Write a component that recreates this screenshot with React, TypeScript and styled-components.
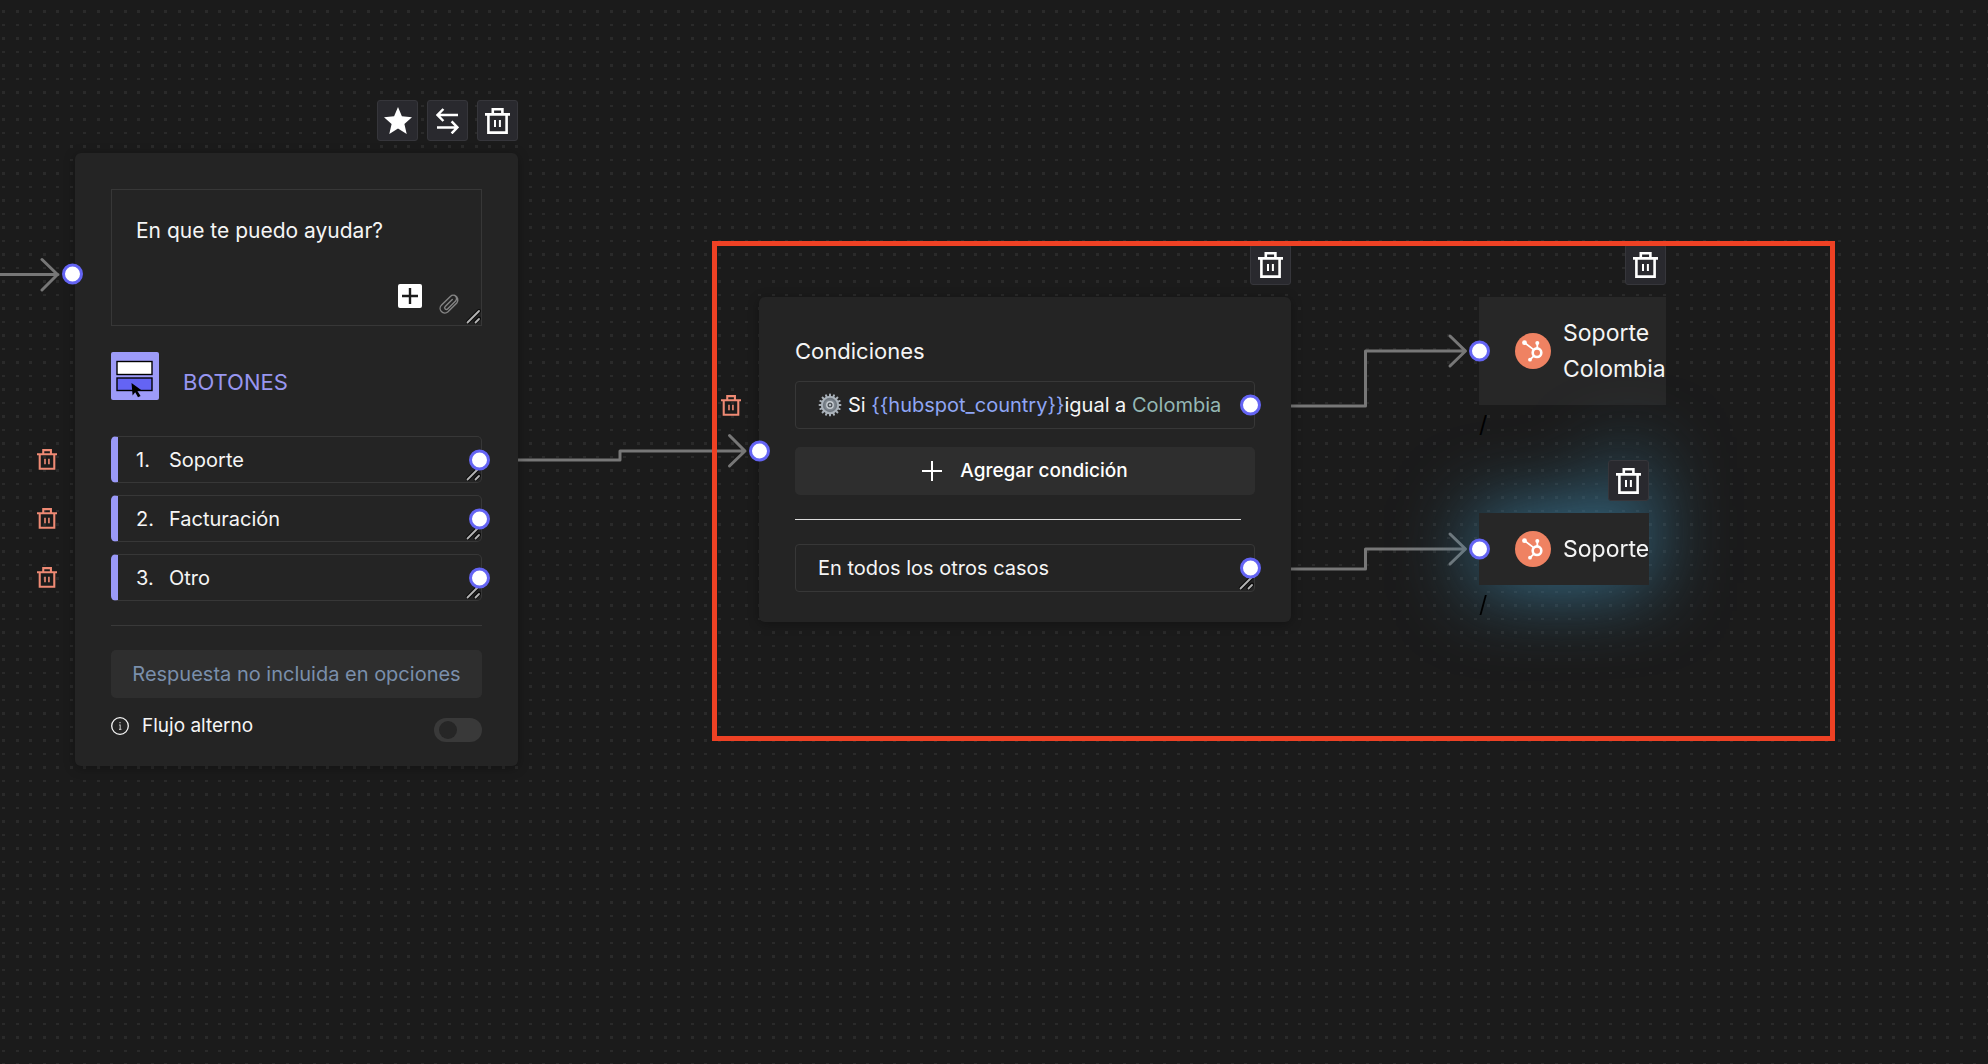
import React from "react";
import styled, { createGlobalStyle } from "styled-components";

const GlobalStyle = createGlobalStyle`
  *, *::before, *::after { box-sizing: border-box; }
  body { margin: 0; background: #1b1b1b; }
  button, input, textarea { font: inherit; color: inherit; margin: 0; }
`;

const Canvas = styled.main`
  position: relative;
  min-height: 100vh;
  overflow: hidden;
  background: #1b1b1b;
  color: #f5f5f5;
  font-family: Inter, "Liberation Sans", sans-serif;
  font-size: 20px;
  line-height: 32px;
`;

const Backdrop = styled.svg`
  position: absolute;
  inset: 0;
  width: 100%;
  height: 100%;
`;

/* Nodes sit freely on the flow canvas */
const Node = styled.section<{ $x: number; $y: number; $w?: number; $glow?: boolean }>`
  position: absolute;
  left: ${(p) => p.$x}px;
  top: ${(p) => p.$y}px;
  width: ${(p) => (p.$w ? `${p.$w}px` : "auto")};
  display: flex;
  flex-direction: column;
  gap: 12px;
  filter: ${(p) => (p.$glow ? "drop-shadow(0 0 40px #3c7c9c)" : "none")};
`;

const Toolbar = styled.div`
  display: flex;
  justify-content: flex-end;
  gap: 9px;
`;

const ToolButton = styled.button`
  width: 41px;
  height: 41px;
  padding: 0;
  display: grid;
  place-items: center;
  background: #29292e;
  border: 1px solid #36363b;
  border-radius: 3px;
  color: #fff;
  cursor: pointer;
`;

const Card = styled.div<{ $bottom: number }>`
  position: relative;
  display: flex;
  flex-direction: column;
  padding: 36px 36px ${(p) => p.$bottom}px;
  background: #242424;
  border-radius: 6px;
  box-shadow: 0 2px 12px rgba(0, 0, 0, 0.3);
`;

const Port = styled.span<{ $side: "left" | "right"; $offset: number; $top?: string }>`
  position: absolute;
  ${(p) => p.$side}: ${(p) => p.$offset}px;
  top: ${(p) => p.$top ?? "50%"};
  width: 21px;
  height: 21px;
  transform: translateY(-50%);
  border: 3px solid #6464f4;
  border-radius: 50%;
  background: #fff;
`;

const MessageBox = styled.div`
  position: relative;
  display: flex;
  height: 137px;
  border: 1px solid #373737;
`;

const MessageText = styled.textarea`
  flex: 1;
  padding: 25px 24px;
  border: 0;
  outline: 0;
  resize: none;
  background: transparent;
  font-size: 21px;
  line-height: 32px;
`;

const MessageTools = styled.div`
  position: absolute;
  right: 21px;
  bottom: 10px;
  display: flex;
  align-items: flex-end;
  gap: 17px;
`;

const BareButton = styled.button`
  display: grid;
  padding: 0;
  border: 0;
  background: transparent;
  cursor: pointer;
`;

const InsertButton = styled(BareButton)`
  width: 24px;
  height: 24px;
  margin-bottom: 7px;
  place-items: center;
  border-radius: 2px;
  background: #fff;
`;

const Grip = styled.svg`
  position: absolute;
  right: 0;
  bottom: 1px;
`;

const KindHeader = styled.header`
  display: flex;
  align-items: flex-end;
  gap: 24px;
  margin-top: 26px;
`;

const KindName = styled.h2`
  margin: 0;
  font-size: 22px;
  font-weight: 400;
  line-height: 36px;
  color: #9896f0;
`;

const OptionList = styled.ol`
  display: flex;
  flex-direction: column;
  gap: 12px;
  margin: 36px 0 0;
  padding: 0;
  list-style: none;
`;

const Option = styled.li`
  position: relative;
  display: flex;
  align-items: center;
  height: 47px;
  padding-left: 18px;
  border: 1px solid #373737;
  border-left: 7px solid #9a99f8;
  border-radius: 5px;
`;

const OptionNumber = styled.label`
  width: 33px;
`;

const FieldInput = styled.input`
  flex: 1;
  min-width: 0;
  padding: 0;
  border: 0;
  outline: 0;
  background: transparent;
`;

const RowDelete = styled(BareButton)<{ $offset: number }>`
  position: absolute;
  left: ${(p) => p.$offset}px;
  color: #ef8a74;
`;

const Divider = styled.hr<{ $light?: boolean }>`
  width: ${(p) => (p.$light ? "calc(100% - 14px)" : "100%")};
  height: 1px;
  margin: 24px 0;
  border: 0;
  background: ${(p) => (p.$light ? "#dcdcdc" : "#393939")};
`;

const WideButton = styled.button<{ $muted?: boolean }>`
  display: flex;
  align-items: center;
  justify-content: center;
  gap: 18px;
  height: 48px;
  border: 0;
  border-radius: 5px;
  background: #2e2e2e;
  color: ${(p) => (p.$muted ? "#7a8fab" : "#fff")};
  cursor: pointer;
`;

const AddButton = styled(WideButton)`
  margin-top: 18px;
  font-size: 19px;
  font-weight: 500;
`;

const AltFlow = styled.div`
  display: flex;
  align-items: flex-start;
  justify-content: space-between;
  margin-top: 18px;
`;

const AltLabel = styled.label`
  display: flex;
  align-items: center;
  gap: 13px;
  font-size: 19px;
  line-height: 20px;
`;

const Switch = styled.input`
  appearance: none;
  display: flex;
  align-items: center;
  width: 48px;
  height: 24px;
  margin-top: 2px;
  padding: 0 5px;
  border-radius: 12px;
  background: #393939;
  cursor: pointer;

  &::before {
    content: "";
    width: 18px;
    height: 18px;
    border-radius: 50%;
    background: #262626;
  }

  &:checked {
    justify-content: flex-end;
    background: #6464f4;
  }
`;

const CardTitle = styled.h2`
  margin: 0 0 12px;
  font-size: 22px;
  font-weight: 400;
  line-height: 36px;
`;

const Condition = styled.div`
  position: relative;
  display: flex;
  align-items: center;
  gap: 6px;
  height: 48px;
  padding-left: 22px;
  border: 1px solid #373737;
  border-radius: 4px;
  white-space: nowrap;
`;

const Variable = styled.span`
  color: #8fa6f5;
`;

const Value = styled.span`
  color: #94b8b5;
`;

const Destination = styled.div`
  position: relative;
  display: flex;
  align-items: center;
  gap: 12px;
  padding: 18px 0 18px 36px;
  background: #272727;
  font-size: 23px;
  line-height: 36px;
`;

const DestinationName = styled.span`
  width: min-content;
`;

const Slash = styled.span`
  position: absolute;
  top: 100%;
  left: 0;
  color: #000;
  font-size: 23px;
  line-height: 40px;
`;

const Highlight = styled.div`
  position: absolute;
  left: 712px;
  top: 241px;
  width: 1123px;
  height: 500px;
  border: 5px solid #ee4124;
  pointer-events: none;
`;

const TrashIcon = ({ w = 25, h = 26 }: { w?: number; h?: number }) => (
  <svg width={w} height={h} viewBox="0 0 25 26" fill="none" stroke="currentColor" strokeWidth="2.6">
    <path d="M0 6.4H25M7.8 6V1.3H17.4V6M3.4 6.4V24.6H21.6V6.4" />
    <path d="M10 12V19M14.9 12V19" strokeWidth="2" />
  </svg>
);

const StarIcon = () => (
  <svg width="28" height="27" viewBox="0 0 28 27" fill="currentColor">
    <path d="M14 0L17.9 9.3L28 10.2L20.4 16.9L22.7 27L14 21.6L5.3 27L7.6 16.9L0 10.2L10.1 9.3Z" />
  </svg>
);

const SwapIcon = () => (
  <svg width="23" height="26" viewBox="0 0 23 26" fill="none" stroke="currentColor" strokeWidth="2.5">
    <path d="M22 7H2M7.4 1L1.6 7L7.4 13M1 19.4H21M15.6 13.4L21.4 19.4L15.6 25.4" />
  </svg>
);

const ClipIcon = () => (
  <svg width="21" height="21" viewBox="0 0 21 21" fill="none" stroke="#858585" strokeWidth="1.4" strokeLinecap="round">
    <path d="M13.3 5.5L6.2 12.6a1.6 1.6 0 0 0 2.4 2.4L16.6 7a3.4 3.4 0 0 0-5-4.8L2.6 11a4.6 4.6 0 0 0 6.4 6.8L17.8 9a5 5 0 0 0-2-7.6" />
  </svg>
);

const GripIcon = () => (
  <Grip width="16" height="15" viewBox="0 0 16 15" strokeLinecap="round">
    <path d="M3 13L14 2M10.5 13L14 9.5" stroke="#0c0c0c" strokeWidth="4" />
    <path d="M2.5 13.5L14 2M10.5 13.5L14 10" stroke="#b4b4b4" strokeWidth="1.8" />
  </Grip>
);

const PlusIcon = ({ size, width, color }: { size: number; width: number; color: string }) => (
  <svg width={size} height={size} viewBox="0 0 20 20" stroke={color} strokeWidth={width}>
    <path d="M10 0V20M0 10H20" />
  </svg>
);

const ButtonsIcon = () => (
  <svg width="48" height="48" viewBox="0 0 48 48">
    <rect width="48" height="48" rx="2" fill="#9d9bf9" />
    <rect x="6" y="9.5" width="35" height="13" fill="#fff" stroke="#000" strokeWidth="1.4" />
    <rect x="6" y="26" width="35" height="12.5" fill="#6464f4" stroke="#000" strokeWidth="1.4" />
    <path d="M20.5 31L30.5 38.2L26.4 38.9L29.6 44L27 45.2L24.2 40.2L21.6 43.4Z" fill="#000" />
  </svg>
);

const InfoIcon = () => (
  <svg width="18" height="18" viewBox="0 0 18 18" fill="none" stroke="#f5f5f5">
    <circle cx="9" cy="9" r="8.3" strokeWidth="1.3" />
    <path d="M8 8H9.2V12.4M8 12.4H10.4M8.4 5.6H9.6" stroke="#bbb" strokeWidth="1.1" />
  </svg>
);

const TEETH = Array.from({ length: 16 }, (_, i) => i * 22.5);

const GearIcon = () => (
  <svg width="24" height="24" viewBox="0 0 24 24">
    {TEETH.map((a) => (
      <rect key={a} x="11" y="0.6" width="2" height="4" rx="0.8" fill="#a8b0b8" transform={`rotate(${a} 12 12)`} />
    ))}
    <circle cx="12" cy="12" r="8.2" fill="#707880" stroke="#aab2ba" strokeWidth="2" />
    <circle cx="12" cy="12" r="5.6" fill="#7f878f" />
    <circle cx="12" cy="12" r="3.2" fill="#4c5258" stroke="#c6ccd2" strokeWidth="1.4" />
    <circle cx="12" cy="12" r="1.2" fill="#b4bac0" />
  </svg>
);

const HubIcon = () => (
  <svg width="36" height="36" viewBox="0 0 36 36">
    <circle cx="18" cy="18" r="18" fill="#ef8262" />
    <g fill="none" stroke="#fff">
      <circle cx="22" cy="19.7" r="4.3" strokeWidth="2.6" />
      <path d="M9.6 9.8L18.6 16.6M22.3 10V15.4M15 26.6L19 22.8" strokeWidth="1.8" />
    </g>
    <g fill="#fff">
      <circle cx="9.5" cy="9.7" r="2.4" />
      <circle cx="22.3" cy="10" r="2" />
      <circle cx="15" cy="26.7" r="1.9" />
    </g>
  </svg>
);

const LINKS = [
  "M0 274.5H58M42 259.5L57.5 274.5L42 290",
  "M518 460H620V451H745M729.5 435.5L745 451L729.5 466",
  "M1290 406H1365.5V351H1465M1450 336L1465.5 351L1450 366",
  "M1290 569H1365.5V549H1465M1450 534L1465.5 549L1450 564",
];

const OPTIONS = ["Soporte", "Facturación", "Otro"];

const DeleteTool = () => (
  <ToolButton type="button" aria-label="Eliminar bloque">
    <TrashIcon />
  </ToolButton>
);

const HubNode = ({ x, y, name, glow }: { x: number; y: number; name: string; glow?: boolean }) => (
  <Node $x={x} $y={y} $glow={glow}>
    <Toolbar>
      <DeleteTool />
    </Toolbar>
    <Destination>
      <Port $side="left" $offset={-10} />
      <HubIcon />
      <DestinationName>{name}</DestinationName>
      <Slash>/</Slash>
    </Destination>
  </Node>
);

export default function App() {
  return (
    <Canvas>
      <GlobalStyle />
      <Backdrop aria-hidden="true">
        <defs>
          <pattern id="dots" width="27" height="27" patternUnits="userSpaceOnUse">
            <path d="M2 10h3v3h-3zM16 10h3v3h-3zM2 24h3v2h-3zM16 24h3v2h-3z" fill="#2a2a2a" />
          </pattern>
        </defs>
        <rect width="100%" height="100%" fill="url(#dots)" />
        {LINKS.map((d) => (
          <path key={d} d={d} fill="none" stroke="#777" strokeWidth="3" strokeLinecap="round" strokeLinejoin="round" />
        ))}
      </Backdrop>

      <Node $x={75} $y={100} $w={443}>
        <Toolbar>
          <ToolButton type="button" aria-label="Marcar como inicio">
            <StarIcon />
          </ToolButton>
          <ToolButton type="button" aria-label="Cambiar tipo">
            <SwapIcon />
          </ToolButton>
          <DeleteTool />
        </Toolbar>
        <Card $bottom={24}>
          <Port $side="left" $offset={-13} $top="121px" />
          <MessageBox>
            <MessageText aria-label="Mensaje" spellCheck={false} defaultValue="En que te puedo ayudar?" />
            <MessageTools>
              <InsertButton type="button" aria-label="Insertar variable">
                <PlusIcon size={16} width={3} color="#1b1b1b" />
              </InsertButton>
              <BareButton type="button" aria-label="Adjuntar archivo">
                <ClipIcon />
              </BareButton>
            </MessageTools>
            <GripIcon />
          </MessageBox>
          <KindHeader>
            <ButtonsIcon />
            <KindName>BOTONES</KindName>
          </KindHeader>
          <OptionList>
            {OPTIONS.map((text, i) => (
              <Option key={text}>
                <RowDelete type="button" aria-label={`Eliminar ${text}`} $offset={-81}>
                  <TrashIcon w={20} h={21} />
                </RowDelete>
                <OptionNumber htmlFor={`option-${i}`}>{i + 1}.</OptionNumber>
                <FieldInput id={`option-${i}`} defaultValue={text} spellCheck={false} />
                <GripIcon />
                <Port $side="right" $offset={-9} />
              </Option>
            ))}
          </OptionList>
          <Divider />
          <WideButton type="button" $muted>
            Respuesta no incluida en opciones
          </WideButton>
          <AltFlow>
            <AltLabel htmlFor="alt-flow">
              <InfoIcon />
              Flujo alterno
            </AltLabel>
            <Switch id="alt-flow" type="checkbox" role="switch" />
          </AltFlow>
        </Card>
      </Node>

      <Node $x={759} $y={244} $w={532}>
        <Toolbar>
          <DeleteTool />
        </Toolbar>
        <Card $bottom={30}>
          <Port $side="left" $offset={-10} $top="154px" />
          <CardTitle>Condiciones</CardTitle>
          <Condition>
            <RowDelete type="button" aria-label="Eliminar condición" $offset={-75}>
              <TrashIcon w={20} h={21} />
            </RowDelete>
            <GearIcon />
            <span>
              Si <Variable>{"{{hubspot_country}}"}</Variable>igual a <Value>Colombia</Value>
            </span>
            <Port $side="right" $offset={-7} />
          </Condition>
          <AddButton type="button">
            <PlusIcon size={20} width={2} color="#fff" />
            Agregar condición
          </AddButton>
          <Divider $light />
          <Condition>
            <FieldInput aria-label="Caso por defecto" defaultValue="En todos los otros casos" spellCheck={false} />
            <GripIcon />
            <Port $side="right" $offset={-7} />
          </Condition>
        </Card>
      </Node>

      <HubNode x={1479} y={244} name="Soporte Colombia" />
      <HubNode x={1479} y={460} name="Soporte" glow />

      <Highlight />
    </Canvas>
  );
}
